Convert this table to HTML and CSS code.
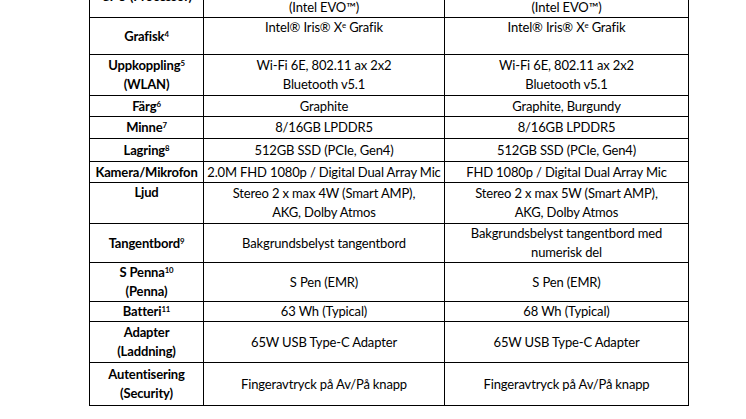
FILE: index.html
```html
<!DOCTYPE html>
<html lang="sv">
<head>
<meta charset="utf-8">
<title>Specifikationer</title>
<link rel="stylesheet" href="styles.css">
</head>
<body>
<div class="page">
<table class="spec">
  <colgroup>
    <col class="col-label">
    <col class="col-a">
    <col class="col-b">
  </colgroup>
  <tbody>
    <tr class="r0">
      <td class="label">CPU (Processor)</td>
      <td class="top first">Intel® Core™ i5/i7 Processor<br>(Intel EVO™)</td>
      <td class="top first">Intel® Core™ i5/i7 Processor<br>(Intel EVO™)</td>
    </tr>
    <tr class="r-grafisk">
      <td class="label">Grafisk<sup>4</sup></td>
      <td class="top">Intel® Iris® X<sup>e</sup> Grafik</td>
      <td class="top">Intel® Iris® X<sup>e</sup> Grafik</td>
    </tr>
    <tr class="r-wlan">
      <td class="label">Uppkoppling<sup>5</sup><br>(WLAN)</td>
      <td>Wi-Fi 6E, 802.11 ax 2x2<br>Bluetooth v5.1</td>
      <td>Wi-Fi 6E, 802.11 ax 2x2<br>Bluetooth v5.1</td>
    </tr>
    <tr class="r-farg">
      <td class="label">Färg<sup>6</sup></td>
      <td>Graphite</td>
      <td>Graphite, Burgundy</td>
    </tr>
    <tr class="r-minne">
      <td class="label">Minne<sup>7</sup></td>
      <td>8/16GB LPDDR5</td>
      <td>8/16GB LPDDR5</td>
    </tr>
    <tr class="r-lagring">
      <td class="label">Lagring<sup>8</sup></td>
      <td>512GB SSD (PCIe, Gen4)</td>
      <td>512GB SSD (PCIe, Gen4)</td>
    </tr>
    <tr class="r-kamera">
      <td class="label">Kamera/Mikrofon</td>
      <td>2.0M FHD 1080p / Digital Dual Array Mic</td>
      <td>FHD 1080p / Digital Dual Array Mic</td>
    </tr>
    <tr class="r-ljud">
      <td class="label top">Ljud</td>
      <td>Stereo 2 x max 4W (Smart AMP),<br>AKG, Dolby Atmos</td>
      <td>Stereo 2 x max 5W (Smart AMP),<br>AKG, Dolby Atmos</td>
    </tr>
    <tr class="r-tangent">
      <td class="label">Tangentbord<sup>9</sup></td>
      <td>Bakgrundsbelyst tangentbord</td>
      <td>Bakgrundsbelyst tangentbord med<br>numerisk del</td>
    </tr>
    <tr class="r-penna">
      <td class="label">S Penna<sup>10</sup><br>(Penna)</td>
      <td>S Pen (EMR)</td>
      <td>S Pen (EMR)</td>
    </tr>
    <tr class="r-batteri">
      <td class="label">Batteri<sup>11</sup></td>
      <td>63 Wh (Typical)</td>
      <td>68 Wh (Typical)</td>
    </tr>
    <tr class="r-adapter">
      <td class="label">Adapter<br>(Laddning)</td>
      <td>65W USB Type-C Adapter</td>
      <td>65W USB Type-C Adapter</td>
    </tr>
    <tr class="r-auth">
      <td class="label">Autentisering<br>(Security)</td>
      <td>Fingeravtryck på Av/På knapp</td>
      <td>Fingeravtryck på Av/På knapp</td>
    </tr>
  </tbody>
</table>
</div>
</body>
</html>
```

FILE: styles.css
```css
* { box-sizing: border-box; }

html, body {
  margin: 0;
  padding: 0;
  background: #ffffff;
}

body {
  font-family: "Lato", "Noto Sans", sans-serif;
  font-size: 13px;
  letter-spacing: -0.15px;
  color: #000000;
}

.page {
  height: 419px;
  overflow: hidden;
  padding-left: 89px;
}

.spec {
  border-collapse: collapse;
  table-layout: fixed;
  width: 599px;
  margin-top: -26px;
}

.col-label { width: 114px; }
.col-a { width: 241px; }
.col-b { width: 244px; }

.spec td {
  border: 1px solid #000000;
  padding: 0 3px;
  text-align: center;
  vertical-align: middle;
  line-height: 19px;
  white-space: nowrap;
}

.spec td.top { vertical-align: top; }

.spec td.first { padding-top: 4px; }

.spec td.label { font-weight: 700; }

.spec sup {
  font-size: 0.6em;
  line-height: 0;
  vertical-align: 0.55em;
}

.r0 { height: 42px; }
.r-grafisk { height: 37px; }
.r-wlan { height: 41px; }
.r-farg { height: 21px; }
.r-minne { height: 22px; }
.r-lagring { height: 23px; }
.r-kamera { height: 21px; }
.r-ljud { height: 41px; }
.r-tangent { height: 38px; }
.r-penna { height: 39px; }
.r-batteri { height: 20px; }
.r-adapter { height: 41px; }
.r-auth { height: 43px; }
```
